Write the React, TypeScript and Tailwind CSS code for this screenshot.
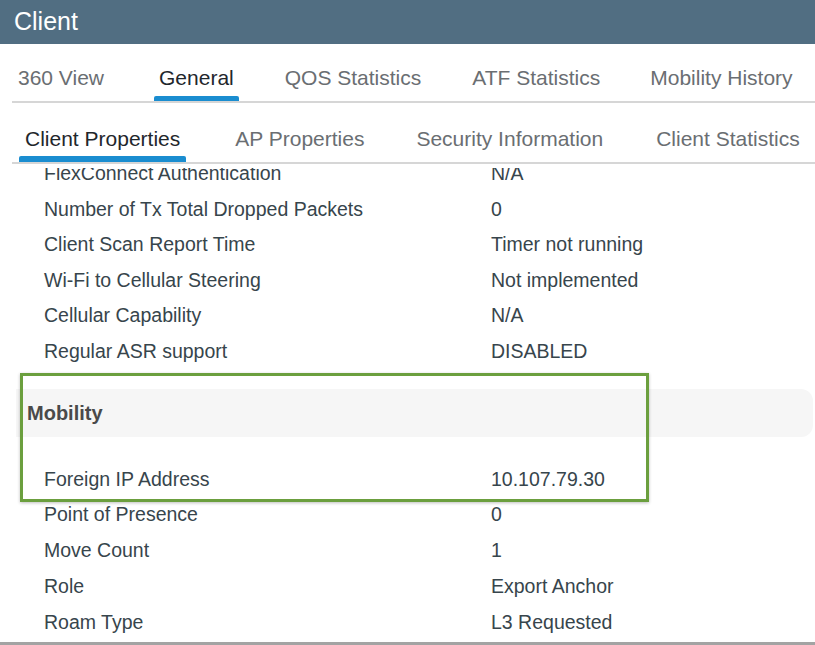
import React from "react";

const rowsA: [string, string][] = [
  ["FlexConnect Authentication", "N/A"],
  ["Number of Tx Total Dropped Packets", "0"],
  ["Client Scan Report Time", "Timer not running"],
  ["Wi-Fi to Cellular Steering", "Not implemented"],
  ["Cellular Capability", "N/A"],
  ["Regular ASR support", "DISABLED"],
];

const rowsB: [string, string][] = [
  ["Foreign IP Address", "10.107.79.30"],
  ["Point of Presence", "0"],
  ["Move Count", "1"],
  ["Role", "Export Anchor"],
  ["Roam Type", "L3 Requested"],
];

function Row({ label, value, tall }: { label: string; value: string; tall?: boolean }) {
  return (
    <div className={`flex items-center text-[19.5px] text-[#37454c] ${tall ? "h-[35.75px]" : "h-[35.5px]"}`}>
      <div className="w-[491px] pl-[44px]">{label}</div>
      <div>{value}</div>
    </div>
  );
}

export default function App() {
  return (
    <div className="relative w-[815px] h-[645px] overflow-hidden bg-white flex flex-col" style={{ fontFamily: '"Liberation Sans", Arial, sans-serif' }}>
      {/* title bar */}
      <div className="h-[44px] shrink-0 bg-[#516e82] flex items-center pl-[14px] text-[25px] text-white">Client</div>

      {/* top tabs */}
      <div className="ml-[12px] h-[59px] shrink-0 border-b-2 border-[#d6d6d6] flex">
        <div className="flex items-center h-full pt-[10px] text-[21px] text-[#6a6e72]">
          <span className="ml-[6px]">360 View</span>
          <span className="relative ml-[55px] text-[#1f272c] h-full flex items-center">
            General
            <span className="absolute left-[-5px] right-[-5px] bottom-0 h-[5px] bg-[#1a8dd0] rounded-t-[2px]" />
          </span>
          <span className="ml-[51px]">QOS Statistics</span>
          <span className="ml-[51px]">ATF Statistics</span>
          <span className="ml-[50px]">Mobility History</span>
        </div>
      </div>

      {/* sub tabs */}
      <div className="ml-[12px] h-[61px] shrink-0 border-b-2 border-[#d6d6d6] flex items-center pt-[13px] text-[21px] text-[#6a6e72]">
        <span className="relative ml-[13px] text-[#1f272c] h-full flex items-center">
          Client Properties
          <span className="absolute left-[-6px] right-[-6px] bottom-0 h-[6px] bg-[#1a8dd0] rounded-t-[2px]" />
        </span>
        <span className="ml-[55px]">AP Properties</span>
        <span className="ml-[52px]">Security Information</span>
        <span className="ml-[53px]">Client Statistics</span>
      </div>

      {/* content */}
      <div className="relative flex-1 overflow-hidden mt-[4px]">
        <div className="mt-[-11.75px]">
          {rowsA.map(([l, v]) => (
            <Row key={l} label={l} value={v} />
          ))}
          <div className="mt-[20px] ml-[16px] mr-[2px] h-[48px] bg-[#f6f6f6] rounded-r-xl flex items-center pl-[11px] text-[20px] font-bold text-[#4a4a4a]">
            Mobility
          </div>
          <div className="mt-[24px]">
            {rowsB.map(([l, v]) => (
              <Row key={l} label={l} value={v} tall />
            ))}
          </div>
        </div>
        <div className="absolute left-0 right-0 bottom-0 h-[3px] bg-[#a3a3a3]" />
      </div>

      {/* highlight box */}
      <div className="absolute left-[20px] top-[373px] w-[629px] h-[129px] border-[3px] border-[#6b9f3e] shadow-[0_1px_3px_rgba(0,0,0,0.25)] pointer-events-none" />
    </div>
  );
}
